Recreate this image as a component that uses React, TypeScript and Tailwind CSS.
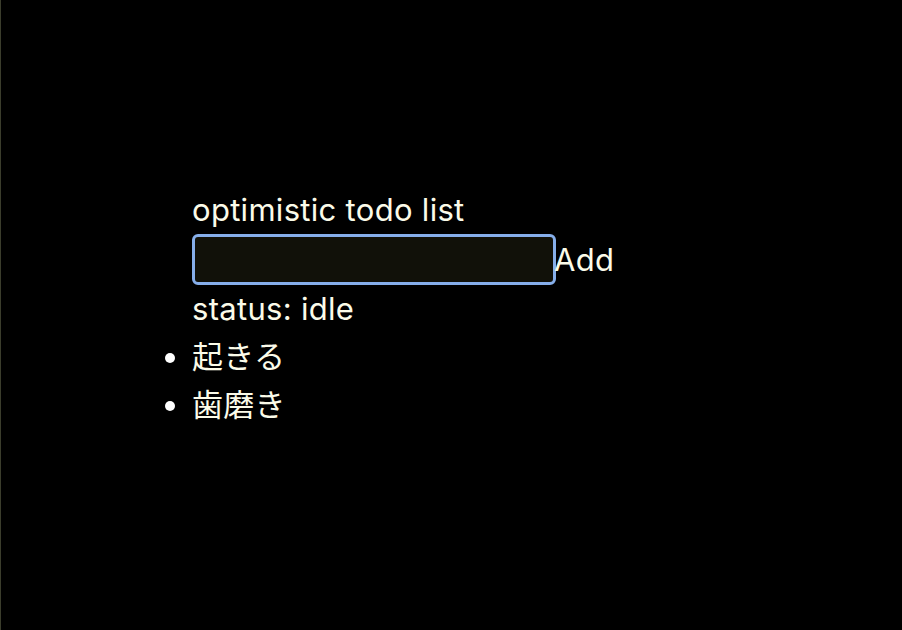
import React from 'react';

const todos = ['起きる', '歯磨き'];

export default function App() {
  return (
    <div className="min-h-[630px] w-[902px] bg-black border-l border-[#3b3d2c] text-[#fbfbe9] font-['Inter','Noto_Sans_CJK_JP',sans-serif] text-[31px] tracking-[0.3px] leading-[48px]">
      <div className="pl-[191px] pt-[186px]">
        <h1 className="font-normal">optimistic todo list</h1>
        <form className="flex items-center" onSubmit={e => e.preventDefault()}>
          <input className="w-[364px] h-[51px] bg-[#111109] border-[3px] border-[#86aeea] rounded-[6px] outline-none" />
          <button className="text-[#fbfbe9] leading-[48px] -ml-[2px]">Add</button>
        </form>
        <p>status: idle</p>
        <ul className="list-disc">
          {todos.map(t => (
            <li key={t} className="marker:text-white">{t}</li>
          ))}
        </ul>
      </div>
    </div>
  );
}
